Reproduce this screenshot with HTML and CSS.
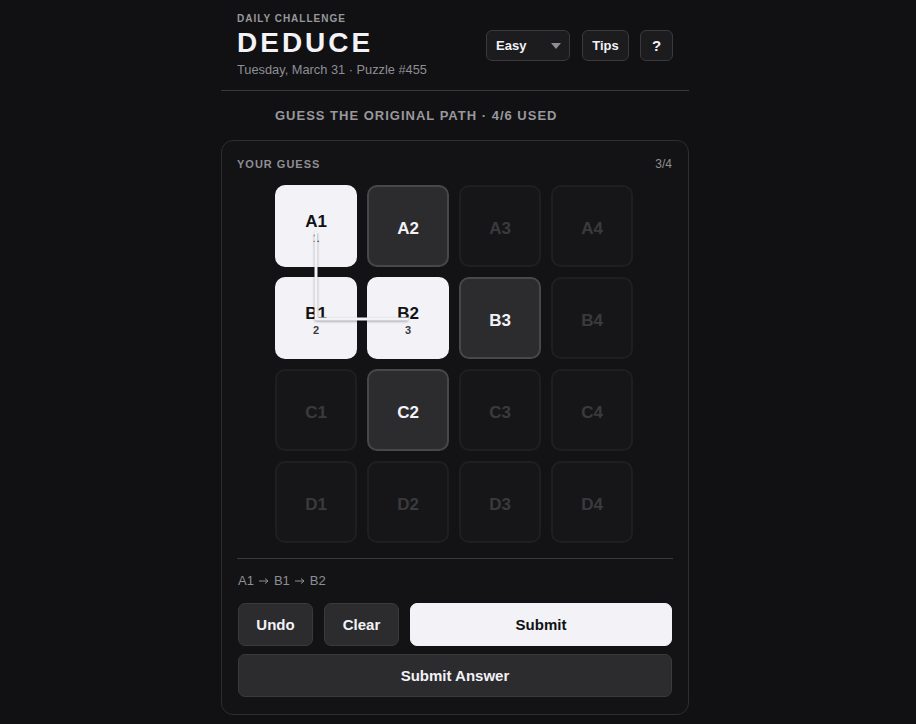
FILE: index.html
```html
<!DOCTYPE html>
<html lang="en">
<head>
<meta charset="utf-8">
<title>Deduce</title>
<link rel="stylesheet" href="styles.css">
</head>
<body>
<div class="page">
  <header class="header">
    <div class="brand">
      <div class="eyebrow">DAILY CHALLENGE</div>
      <h1 class="title">DEDUCE</h1>
      <div class="subtitle">Tuesday, March 31 · Puzzle #455</div>
    </div>
    <div class="controls">
      <div class="select">Easy <span class="caret"></span></div>
      <button class="ctl">Tips</button>
      <button class="ctl icon">?</button>
    </div>
  </header>
  <div class="status">GUESS THE ORIGINAL PATH · 4/6 USED</div>
  <section class="card">
    <div class="card-head">
      <span class="card-label">YOUR GUESS</span>
      <span class="count">3/4</span>
    </div>
    <div class="grid-wrap">
      <div class="grid">
        <div class="tile sel"><span class="lbl">A1</span><span class="step">1</span></div>
        <div class="tile avail"><span class="lbl">A2</span></div>
        <div class="tile off"><span class="lbl">A3</span></div>
        <div class="tile off"><span class="lbl">A4</span></div>
        <div class="tile sel"><span class="lbl">B1</span><span class="step">2</span></div>
        <div class="tile sel"><span class="lbl">B2</span><span class="step">3</span></div>
        <div class="tile avail"><span class="lbl">B3</span></div>
        <div class="tile off"><span class="lbl">B4</span></div>
        <div class="tile off"><span class="lbl">C1</span></div>
        <div class="tile avail"><span class="lbl">C2</span></div>
        <div class="tile off"><span class="lbl">C3</span></div>
        <div class="tile off"><span class="lbl">C4</span></div>
        <div class="tile off"><span class="lbl">D1</span></div>
        <div class="tile off"><span class="lbl">D2</span></div>
        <div class="tile off"><span class="lbl">D3</span></div>
        <div class="tile off"><span class="lbl">D4</span></div>
        <svg class="path" width="358" height="358" viewBox="0 0 358 358">
          <polyline points="41,47 41,134 133,134" fill="none" stroke="#f2f2f7" stroke-width="3" stroke-linejoin="round"/>
        </svg>
      </div>
    </div>
    <div class="sequence">A1<svg class="arrow" width="10" height="8" viewBox="0 0 10 8"><path d="M0 4H9M6 1.5L9 4L6 6.5" fill="none" stroke="#8e8e93" stroke-width="1"/></svg>B1<svg class="arrow" width="10" height="8" viewBox="0 0 10 8"><path d="M0 4H9M6 1.5L9 4L6 6.5" fill="none" stroke="#8e8e93" stroke-width="1"/></svg>B2</div>
    <div class="actions">
      <button class="btn">Undo</button>
      <button class="btn">Clear</button>
      <button class="btn primary">Submit</button>
    </div>
    <button class="btn wide">Submit Answer</button>
  </section>
</div>
</body>
</html>
```
FILE: styles.css
```css
* { box-sizing: border-box; }
html, body { margin: 0; padding: 0; }
body {
  background: #111113;
  color: #f2f2f7;
  font-family: "Liberation Sans", Arial, sans-serif;
}
.page {
  width: 468px;
  margin-left: 221px;
}
.header {
  display: flex;
  justify-content: space-between;
  align-items: flex-start;
  padding: 13px 16px 12px;
  border-bottom: 1px solid #3a3a3c;
}
.eyebrow {
  font-size: 10px;
  font-weight: 700;
  letter-spacing: 1px;
  color: #98989d;
  line-height: 12px;
}
.title {
  margin: 3px 0 0;
  font-size: 28px;
  font-weight: 700;
  letter-spacing: 3px;
  line-height: 30px;
  color: #f2f2f7;
}
.subtitle {
  margin-top: 4px;
  font-size: 12.8px;
  color: #8e8e93;
  line-height: 16px;
}
.controls {
  display: flex;
  gap: 11px;
  margin-top: 17px;
}
.select, .ctl {
  height: 31px;
  border: 1px solid #3a3a3c;
  border-radius: 6px;
  background: #1c1c1e;
  color: #f2f2f7;
  font-family: inherit;
  font-size: 13px;
  font-weight: 700;
  display: flex;
  align-items: center;
}
.select {
  width: 84px;
  padding: 0 8px 0 9px;
  justify-content: space-between;
  margin-right: 1px;
}
.caret {
  width: 0; height: 0;
  border-left: 5px solid transparent;
  border-right: 5px solid transparent;
  border-top: 6px solid #8e8e93;
}
.ctl {
  width: 47px;
  padding: 0;
  justify-content: center;
}
.ctl.icon { width: 33px; font-size: 15px; }
.status {
  padding: 17px 0 0 54px;
  height: 49px;
  font-size: 13px;
  font-weight: 700;
  letter-spacing: 1px;
  color: #98989d;
}
.card {
  border: 1px solid #2e2e31;
  border-radius: 12px;
  background: #131315;
  padding: 16px 15px 17px;
}
.card-head {
  display: flex;
  justify-content: space-between;
  align-items: center;
  line-height: 14px;
  padding-right: 1px;
}
.card-label {
  font-size: 11px;
  font-weight: 700;
  letter-spacing: 1px;
  color: #8e8e93;
}
.count { font-size: 12px; color: #8e8e93; }
.grid-wrap {
  display: flex;
  justify-content: center;
  padding: 14px 0 15px;
  border-bottom: 1px solid #3a3a3c;
}
.grid {
  position: relative;
  display: grid;
  grid-template-columns: repeat(4, 82px);
  grid-auto-rows: 82px;
  gap: 10px;
  margin-left: -2px;
}
.tile {
  border-radius: 10px;
  display: flex;
  flex-direction: column;
  align-items: center;
  justify-content: center;
  font-weight: 700;
  padding-top: 6px;
}
.lbl { font-size: 17px; line-height: 18px; }
.step { font-size: 11px; line-height: 12px; margin-top: 1px; color: #3a3a3c; }
.sel { background: #f2f2f7; color: #111113; }
.sel .lbl { margin-top: -2px; }
.avail { background: #2c2c2e; border: 2px solid #48484a; color: #f2f2f7; }
.off { background: #161618; border: 2px solid #1f1f21; color: #3a3a3c; }
.path {
  position: absolute;
  left: 0; top: 0;
  pointer-events: none;
  filter: drop-shadow(0 1px 1px rgba(0,0,0,0.35));
}
.sequence {
  display: flex;
  align-items: center;
  margin-top: 13px;
  font-size: 13px;
  color: #8e8e93;
  line-height: 17px;
  padding-left: 1px;
}
.arrow { margin: 1px 5px 0 5px; }
.actions {
  display: flex;
  gap: 11px;
  margin-top: 14px;
  padding: 0 1px;
}
.btn {
  height: 43px;
  border: 1px solid #3a3a3c;
  border-radius: 7px;
  background: #2c2c2e;
  color: #f2f2f7;
  font-family: inherit;
  font-size: 15px;
  font-weight: 700;
  padding: 0;
}
.actions .btn { width: 75px; }
.actions .btn.primary {
  flex: 1;
  background: #f2f2f7;
  color: #111113;
  border-color: #f2f2f7;
}
.btn.wide {
  display: block;
  width: calc(100% - 2px);
  margin: 8px 1px 0;
}
```
